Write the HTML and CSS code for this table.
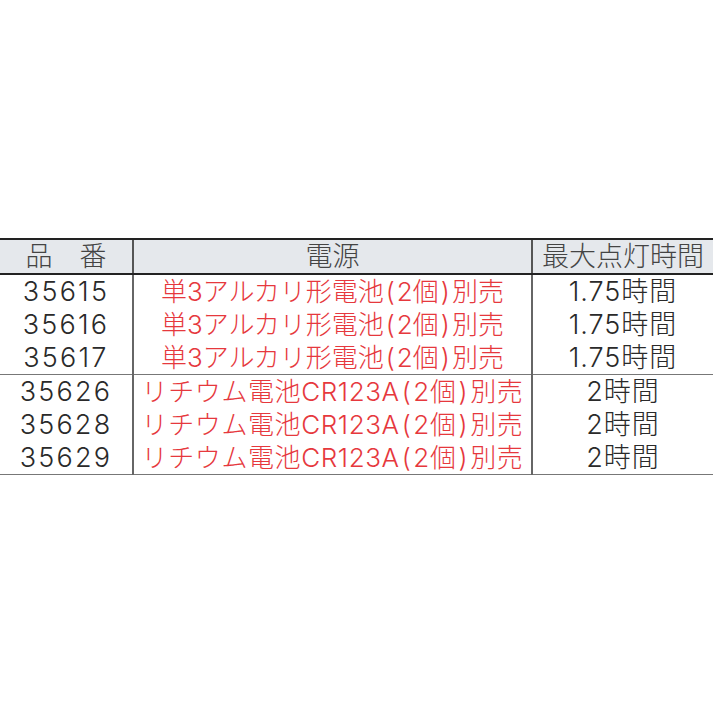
FILE: index.html
```html
<!DOCTYPE html>
<html lang="ja">
<head>
<meta charset="utf-8">
<link rel="stylesheet" href="styles.css">
</head>
<body>
<table class="spec">
  <colgroup>
    <col class="c-no">
    <col class="c-power">
    <col class="c-time">
  </colgroup>
  <thead>
    <tr><th>品　番</th><th>電源</th><th>最大点灯時間</th></tr>
  </thead>
  <tbody class="grp">
    <tr><td class="no">35615</td><td class="pw">単3アルカリ形電池<span class="p">(</span>2個<span class="p">)</span>別売</td><td class="tm">1.75時間</td></tr>
    <tr><td class="no">35616</td><td class="pw">単3アルカリ形電池<span class="p">(</span>2個<span class="p">)</span>別売</td><td class="tm">1.75時間</td></tr>
    <tr><td class="no">35617</td><td class="pw">単3アルカリ形電池<span class="p">(</span>2個<span class="p">)</span>別売</td><td class="tm">1.75時間</td></tr>
  </tbody>
  <tbody class="grp grp-li">
    <tr><td class="no">35626</td><td class="pw">リチウム電池CR123A<span class="p">(</span>2個<span class="p">)</span>別売</td><td class="tm">2時間</td></tr>
    <tr><td class="no">35628</td><td class="pw">リチウム電池CR123A<span class="p">(</span>2個<span class="p">)</span>別売</td><td class="tm">2時間</td></tr>
    <tr><td class="no">35629</td><td class="pw">リチウム電池CR123A<span class="p">(</span>2個<span class="p">)</span>別売</td><td class="tm">2時間</td></tr>
  </tbody>
</table>
</body>
</html>
```

FILE: styles.css
```css
html, body {
  margin: 0;
  padding: 0;
  background: #fff;
}
body {
  height: 100vh;
  display: flex;
  align-items: center;
  font-family: Inter, "Noto Sans CJK JP", sans-serif;
  font-weight: 300;
  color: #2a2a2a;
}
.spec {
  width: 713px;
  border-collapse: collapse;
  table-layout: fixed;
  font-size: 27px;
  line-height: 33px;
}
.c-no { width: 133px; }
.c-power { width: 399px; }
.c-time { width: 181px; }
.spec th {
  background: #e5e8ec;
  color: #444;
  font-weight: 300;
  height: 33px;
  padding: 0;
  border-top: 2px solid #222;
  border-bottom: 2px solid #222;
  border-left: 2px solid #555;
  text-align: center;
}
.spec th:first-child { border-left: none; }
.spec td {
  height: 33px;
  padding: 0;
  text-align: center;
  border-left: 2px solid #666;
  white-space: nowrap;
}
.spec td:first-child { border-left: none; }
.grp { border-bottom: 1px solid #777; }
.no {
  letter-spacing: 2.2px;
  padding-left: 6px;
}
.tm {
  letter-spacing: 1px;
  padding-left: 1px;
}
.pw {
  color: #e6383d;
  font-size: 26px;
}
.grp-li .pw { letter-spacing: 0.6px; }
.p { margin: 0 2px; }
```
